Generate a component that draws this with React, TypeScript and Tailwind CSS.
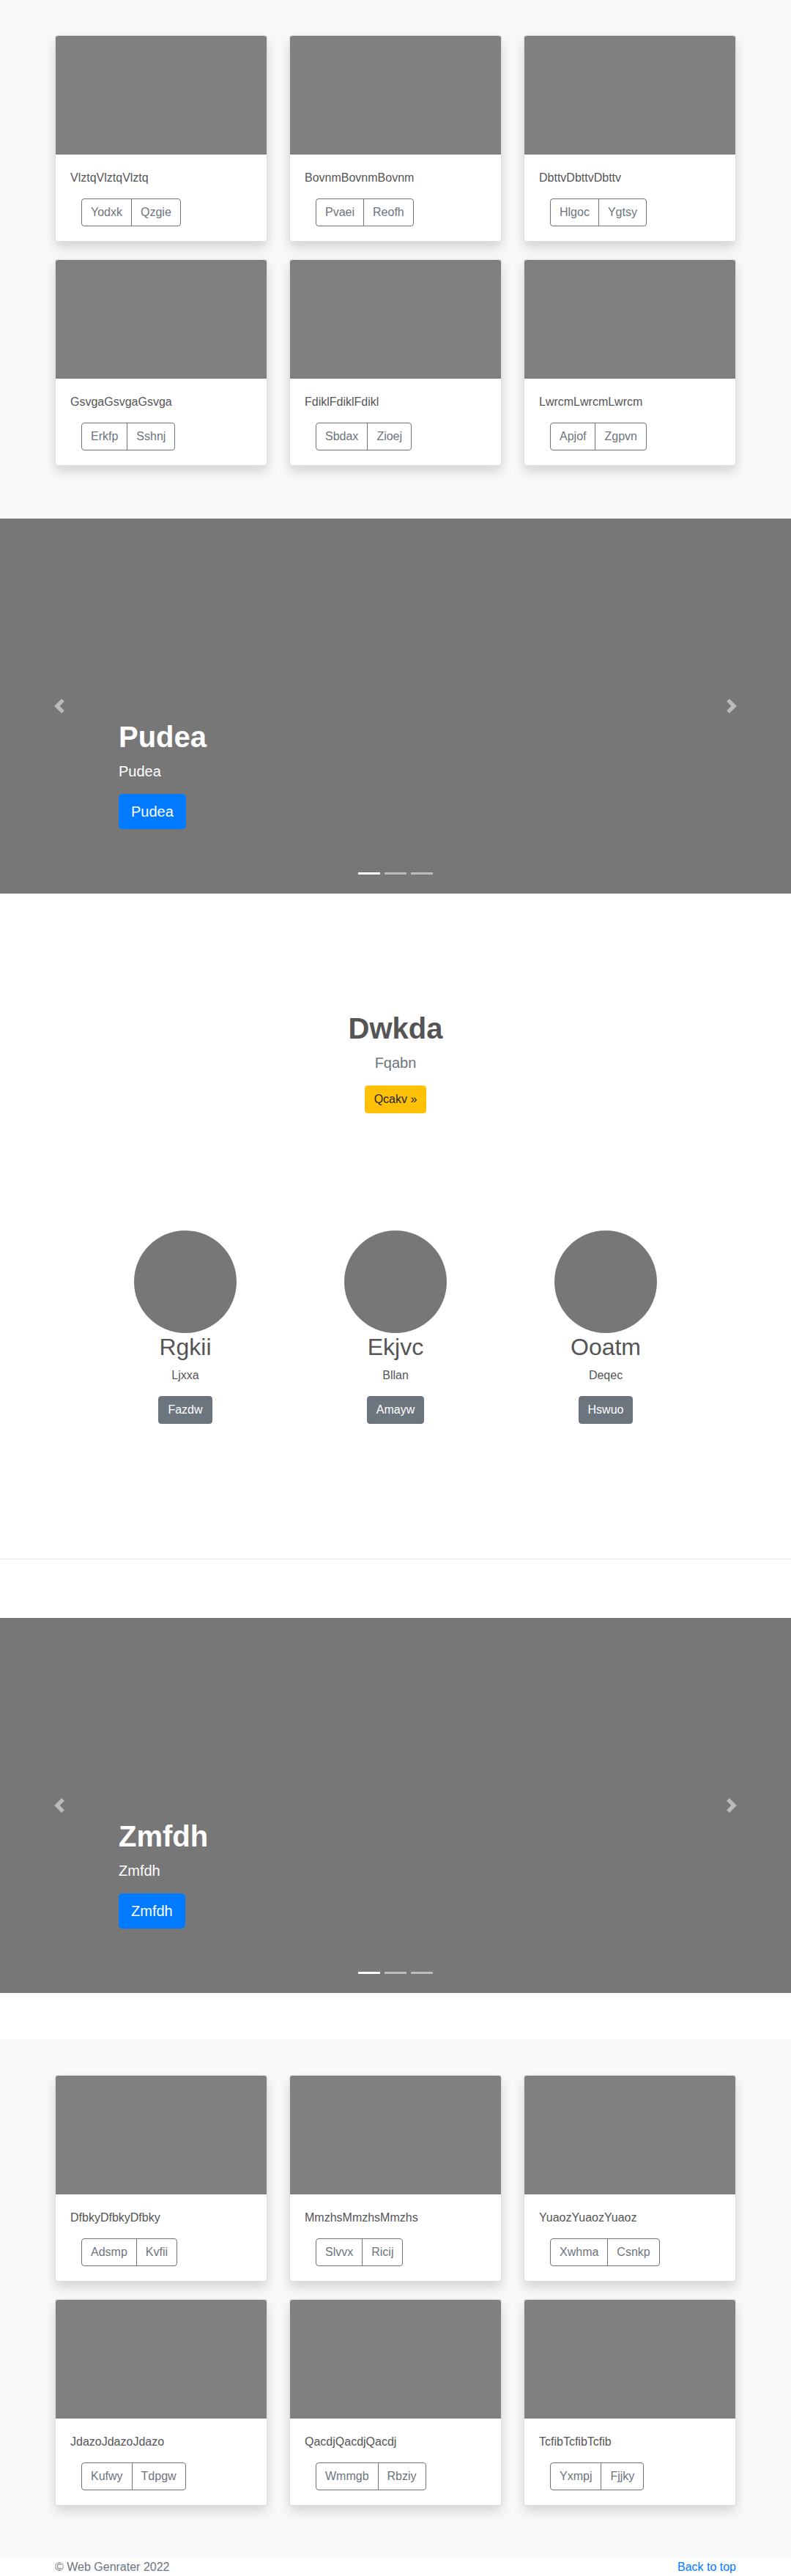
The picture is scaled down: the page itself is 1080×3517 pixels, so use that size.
import React from "react";

interface CardItem {
  title: string;
  buttons: [string, string];
}

const albumOne: CardItem[] = [
  { title: "VlztqVlztqVlztq", buttons: ["Yodxk", "Qzgie"] },
  { title: "BovnmBovnmBovnm", buttons: ["Pvaei", "Reofh"] },
  { title: "DbttvDbttvDbttv", buttons: ["Hlgoc", "Ygtsy"] },
  { title: "GsvgaGsvgaGsvga", buttons: ["Erkfp", "Sshnj"] },
  { title: "FdiklFdiklFdikl", buttons: ["Sbdax", "Zioej"] },
  { title: "LwrcmLwrcmLwrcm", buttons: ["Apjof", "Zgpvn"] },
];

const albumTwo: CardItem[] = [
  { title: "DfbkyDfbkyDfbky", buttons: ["Adsmp", "Kvfii"] },
  { title: "MmzhsMmzhsMmzhs", buttons: ["Slvvx", "Ricij"] },
  { title: "YuaozYuaozYuaoz", buttons: ["Xwhma", "Csnkp"] },
  { title: "JdazoJdazoJdazo", buttons: ["Kufwy", "Tdpgw"] },
  { title: "QacdjQacdjQacdj", buttons: ["Wmmgb", "Rbziy"] },
  { title: "TcfibTcfibTcfib", buttons: ["Yxmpj", "Fjjky"] },
];

const people = [
  { name: "Rgkii", sub: "Ljxxa", cta: "Fazdw" },
  { name: "Ekjvc", sub: "Bllan", cta: "Amayw" },
  { name: "Ooatm", sub: "Deqec", cta: "Hswuo" },
];

const Album = ({ items }: { items: CardItem[] }) => (
  <section className="bg-[#f8f9fa] py-12">
    <div className="w-[930px] mx-auto grid grid-cols-3 gap-x-[30px]">
      {items.map((item) => (
        <div
          key={item.title}
          className="mb-6 bg-white border border-black/[0.125] rounded shadow-[0_8px_16px_rgba(0,0,0,0.15)] overflow-hidden"
        >
          <div className="h-[162px] bg-[#808080]" />
          <div className="p-5">
            <p className="text-base leading-6 text-[#555] mb-4">{item.title}</p>
            <div className="ml-[15px] inline-flex">
              <button className="px-3 py-1.5 text-base leading-6 text-[#6c757d] border border-[#6c757d] rounded-l">
                {item.buttons[0]}
              </button>
              <button className="-ml-px px-3 py-1.5 text-base leading-6 text-[#6c757d] border border-[#6c757d] rounded-r">
                {item.buttons[1]}
              </button>
            </div>
          </div>
        </div>
      ))}
    </div>
  </section>
);

const Chevron = ({ flip }: { flip?: boolean }) => (
  <svg
    width="20"
    height="20"
    viewBox="0 0 8 8"
    fill="#fff"
    className={flip ? "rotate-180" : ""}
  >
    <path d="M5.25 0l-4 4 4 4 1.5-1.5L4.25 4l2.5-2.5L5.25 0z" />
  </svg>
);

const Carousel = ({ label }: { label: string }) => (
  <div className="relative h-[512px] bg-[#777] flex flex-col justify-end pl-[162px] pb-[88px]">
    <h1 className="text-[40px] leading-[1.2] font-semibold text-white mb-2">{label}</h1>
    <p className="text-[20px] leading-[30px] text-white mb-4">{label}</p>
    <div>
      <button className="px-4 py-2 text-[20px] leading-[30px] text-white bg-[#007bff] border border-[#007bff] rounded-[5px]">
        {label}
      </button>
    </div>

    {/* controls */}
    <div className="absolute left-0 top-0 bottom-0 w-[15%] flex items-center justify-center opacity-50">
      <Chevron />
    </div>
    <div className="absolute right-0 top-0 bottom-0 w-[15%] flex items-center justify-center opacity-50">
      <Chevron flip />
    </div>

    {/* indicators */}
    <div className="absolute bottom-[26px] left-0 right-0 flex justify-center gap-[6px]">
      <span className="w-[30px] h-[3px] bg-white" />
      <span className="w-[30px] h-[3px] bg-white/50" />
      <span className="w-[30px] h-[3px] bg-white/50" />
    </div>
  </div>
);

export default function App() {
  return (
    <div className="font-['Liberation_Sans',Arial,sans-serif] bg-white text-[#212529]">
      <Album items={albumOne} />
      <Carousel label="Pudea" />

      <section className="pt-[160px] text-center">
        <h1 className="text-[40px] leading-[1.2] font-semibold text-[#555] mb-2">Dwkda</h1>
        <p className="text-[20px] leading-[30px] font-light text-[#6c757d] mb-4">Fqabn</p>
        <button className="px-3 py-1.5 text-base leading-6 text-[#212529] bg-[#ffc107] border border-[#ffc107] rounded">
          Qcakv &raquo;
        </button>

        <div className="w-[861px] mx-auto mt-[160px] pb-[184px] grid grid-cols-3">
          {people.map((p) => (
            <div key={p.name} className="flex flex-col items-center">
              <div className="w-[140px] h-[140px] rounded-full bg-[#777]" />
              <h2 className="text-[32px] leading-[1.2] text-[#555] mb-2">{p.name}</h2>
              <p className="text-base leading-6 text-[#555] mb-4">{p.sub}</p>
              <button className="px-3 py-1.5 text-base leading-6 text-white bg-[#6c757d] border border-[#6c757d] rounded">
                {p.cta}
              </button>
            </div>
          ))}
        </div>
      </section>

      <hr className="border-0 border-t border-black/10 mb-20" />

      <Carousel label="Zmfdh" />

      <div className="mt-16">
        <Album items={albumTwo} />
      </div>

      <footer className="h-6 overflow-hidden">
        <div className="w-[930px] mx-auto flex justify-between text-base leading-6">
          <p className="text-[#6c757d]">&copy; Web Genrater 2022</p>
          <a href="#" className="text-[#007bff]">Back to top</a>
        </div>
      </footer>
    </div>
  );
}
